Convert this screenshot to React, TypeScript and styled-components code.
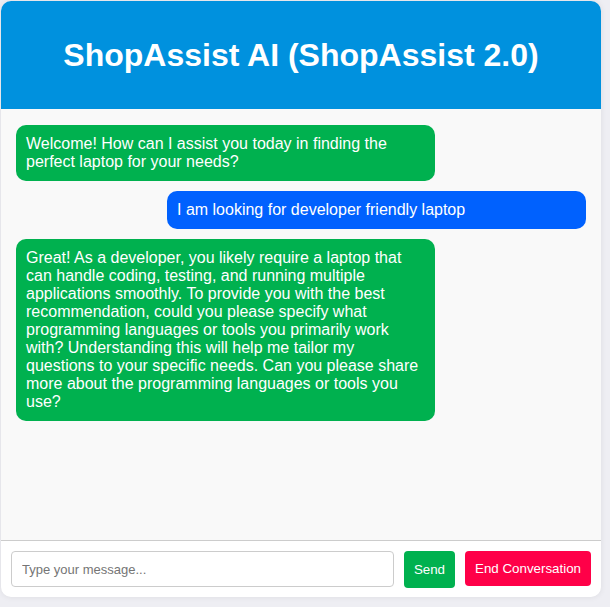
import React from "react";
import styled, { createGlobalStyle } from "styled-components";

const GlobalStyle = createGlobalStyle`
  html, body {
    margin: 0;
    padding: 0;
    background: #eeeef3;
    font-family: "Liberation Sans", Arial, sans-serif;
  }
  * { box-sizing: border-box; }
`;

const Page = styled.div`
  padding: 1px 9px 10px 1px;
`;

const Container = styled.div`
  width: 600px;
  height: 596px;
  background: #ffffff;
  border-radius: 10px;
  overflow: hidden;
  display: flex;
  flex-direction: column;
  box-shadow: 0 0 6px rgba(0, 0, 0, 0.08);
`;

const Header = styled.header`
  height: 108px;
  flex: none;
  background: #0091de;
  color: #ffffff;
  display: flex;
  align-items: center;
  justify-content: center;
`;

const Title = styled.h1`
  margin: 0;
  font-size: 32px;
  font-weight: bold;
`;

const Chat = styled.div`
  flex: 1;
  background: #f9f9f9;
  padding: 16px 15px;
  display: flex;
  flex-direction: column;
  gap: 10px;
  border-bottom: 1px solid #cccccc;
`;

const Bubble = styled.div<{ $user?: boolean }>`
  width: 419px;
  padding: 10px;
  border-radius: 10px;
  font-size: 16px;
  line-height: 18px;
  color: #ffffff;
  background: ${(p) => (p.$user ? "#0061fe" : "#00b14f")};
  align-self: ${(p) => (p.$user ? "flex-end" : "flex-start")};
`;

const InputBar = styled.div`
  flex: none;
  height: 56px;
  padding: 10px;
  display: flex;
  align-items: flex-start;
  gap: 10px;
`;

const TextInput = styled.input`
  flex: 1;
  min-width: 0;
  height: 36px;
  padding: 0 10px;
  border: 1px solid #cccccc;
  border-radius: 4px;
  font-family: "Liberation Sans", Arial, sans-serif;
  font-size: 13px;
  outline: none;
  &::placeholder { color: #757575; }
`;

const Button = styled.button<{ $danger?: boolean }>`
  flex: none;
  height: ${(p) => (p.$danger ? "35px" : "37px")};
  padding: 0 10px;
  border: none;
  border-radius: 4px;
  color: #ffffff;
  font-family: "Liberation Sans", Arial, sans-serif;
  font-size: 13.33px;
  background: ${(p) => (p.$danger ? "#ff0048" : "#00b14f")};
  cursor: pointer;
`;

export default function App() {
  return (
    <Page>
      <GlobalStyle />
      <Container>
        <Header>
          <Title>ShopAssist AI (ShopAssist 2.0)</Title>
        </Header>
        <Chat>
          <Bubble>
            Welcome! How can I assist you today in finding the perfect laptop for your needs?
          </Bubble>
          <Bubble $user>I am looking for developer friendly laptop</Bubble>
          <Bubble>
            Great! As a developer, you likely require a laptop that can handle coding, testing, and
            running multiple applications smoothly. To provide you with the best recommendation,
            could you please specify what programming languages or tools you primarily work with?
            Understanding this will help me tailor my questions to your specific needs. Can you
            please share more about the programming languages or tools you use?
          </Bubble>
        </Chat>
        <InputBar>
          <TextInput placeholder="Type your message..." />
          <Button>Send</Button>
          <Button $danger>End Conversation</Button>
        </InputBar>
      </Container>
    </Page>
  );
}
